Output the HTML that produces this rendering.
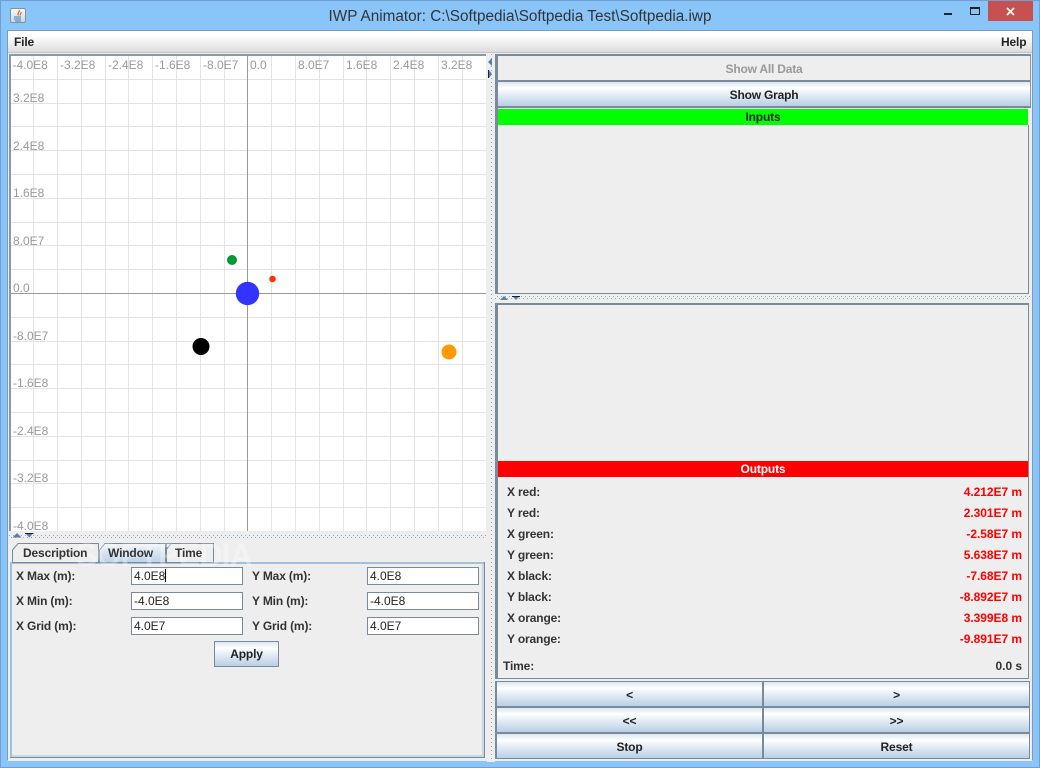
<!DOCTYPE html>
<html><head><meta charset="utf-8"><title>IWP Animator</title>
<style>
html,body{margin:0;padding:0;width:1040px;height:768px;overflow:hidden;background:#8ac5fa}
*{box-sizing:border-box}
body{font-family:"Liberation Sans",sans-serif;font-size:12px;color:#222;position:relative}
.a{position:absolute}
.b{position:absolute;background:#7a8a99}
.t{position:absolute;white-space:nowrap;font-weight:bold;font-size:12px;line-height:14px;color:#333;letter-spacing:-.15px}
.btn{position:absolute;background:linear-gradient(#dbe6f1 0,#fff 25%,#eaf1f8 45%,#b8cfe5 100%);text-align:center;font-weight:bold;color:#222;font-size:12px;letter-spacing:-.15px}
.f{position:absolute;width:112px;height:18px;background:#fff;border:1px solid #7a8a99;padding-left:2px;font-size:12px;line-height:16px;color:#222}
.r{position:absolute;right:18px;font-weight:bold;color:#f00;font-size:12px;line-height:14px;white-space:nowrap;letter-spacing:-.05px}
</style></head><body>
<div class="a" style="left:0;top:0;width:1040px;height:768px;border:1px solid #6fa0d0"></div>
<!-- title -->
<div class="a" style="left:10px;top:8px;width:16px;height:15px;border:1px solid #7d93a8;border-radius:2px;background:linear-gradient(#f4f7fa,#c9d8e6)"></div>
<svg class="a" style="left:10px;top:8px" width="16" height="15"><path d="M9 2c1.500 2-2.500 3-.5 5.500M11 4c.5 1.500-1.500 2-.5 3.500" stroke="#e0661c" stroke-width="1.200" fill="none"/><path d="M4 9h7M4 11h7M5 13h6" stroke="#4a7ba8" stroke-width="1" fill="none"/></svg>
<div class="a" style="left:0;top:8px;width:1040px;text-align:center;font-size:15.3px;line-height:18px;color:#333">IWP Animator: C:\Softpedia\Softpedia Test\Softpedia.iwp</div>
<div class="a" style="left:944px;top:13px;width:8px;height:2px;background:#222"></div>
<div class="a" style="left:970px;top:7px;width:10px;height:8px;border:1px solid #222;border-top-width:2px"></div>
<div class="a" style="left:988px;top:1px;width:45px;height:20px;background:#c75050"></div>
<svg class="a" style="left:1006px;top:7px" width="9" height="9"><path d="M1 1l7 7M8 1l-7 7" stroke="#fff" stroke-width="1.700"/></svg>
<!-- client -->
<div class="a" style="left:7px;top:30px;width:1026px;height:731px;border:1px solid #7a9ab8;border-bottom:1px solid #eee;background:#eeeeee"></div>
<div class="a" style="left:8px;top:31px;width:1024px;height:22px;background:linear-gradient(#fff,#fff 20%,#dcdcdc);border-bottom:1px solid #c4c4c4"></div>
<div class="t" style="left:14px;top:35px;color:#222">File</div>
<div class="t" style="left:1001px;top:35px;color:#222">Help</div>
<!-- plot -->
<svg class="a" style="left:9px;top:54px;shape-rendering:crispEdges" width="478" height="478" viewBox="9 54 478 478">
<rect x="9" y="54" width="478" height="478" fill="#fff"/>
<path stroke="#e3e3e3" stroke-width="1" fill="none" d="M33.500 55V532M57.500 55V532M81.500 55V532M105.500 55V532M128.500 55V532M152.500 55V532M176.500 55V532M200.500 55V532M224.500 55V532M271.500 55V532M295.500 55V532M319.500 55V532M343.500 55V532M366.500 55V532M390.500 55V532M414.500 55V532M438.500 55V532M462.500 55V532M10 79.500H486M10 103.500H486M10 126.500H486M10 150.500H486M10 174.500H486M10 198.500H486M10 222.500H486M10 245.500H486M10 269.500H486M10 317.500H486M10 341.500H486M10 364.500H486M10 388.500H486M10 412.500H486M10 436.500H486M10 460.500H486M10 483.500H486M10 507.500H486"/>
<path stroke="#999" stroke-width="1" fill="none" d="M247.500 55V532M10 293.500H486"/>
<rect x="9" y="54" width="478" height="2" fill="#8a99a8"/><rect x="9" y="54" width="2" height="478" fill="#8a99a8"/>
<rect x="486" y="54" width="1" height="478" fill="#eee"/>
<g shape-rendering="auto" font-family="Liberation Sans" font-size="12" fill="#999">
<text x="12.500" y="69">-4.0E8</text><text x="60" y="69">-3.2E8</text><text x="108" y="69">-2.4E8</text><text x="155" y="69">-1.6E8</text><text x="203" y="69">-8.0E7</text><text x="250" y="69">0.0</text><text x="298" y="69">8.0E7</text><text x="346" y="69">1.6E8</text><text x="393" y="69">2.4E8</text><text x="441" y="69">3.2E8</text>
<text x="13" y="102">3.2E8</text><text x="13" y="150">2.4E8</text><text x="13" y="197">1.6E8</text><text x="13" y="245">8.0E7</text><text x="13" y="292">0.0</text><text x="13" y="340">-8.0E7</text><text x="13" y="387">-1.6E8</text><text x="13" y="435">-2.4E8</text><text x="13" y="482">-3.2E8</text><text x="13" y="530">-4.0E8</text>
<circle cx="232" cy="260" r="5" fill="#009933"/><circle cx="272.500" cy="279" r="3.300" fill="#ff3300"/><circle cx="247.500" cy="293.500" r="11.700" fill="#3333ff"/><circle cx="201" cy="346.500" r="8.500" fill="#000"/><circle cx="449" cy="352" r="7.500" fill="#ff9900"/>
</g></svg>
<!-- splitter left horizontal -->
<svg class="a" style="left:9px;top:531px" width="478" height="10"><defs><pattern id="p" width="4" height="4" patternUnits="userSpaceOnUse"><rect x="0" y="0" width="1" height="1" fill="#8fa8c2"/><rect x="2" y="2" width="1" height="1" fill="#8fa8c2"/></pattern></defs><rect width="478" height="10" fill="#eee"/><rect y="4" width="478" height="3" fill="url(#p)"/><path d="M3.500 6.500L8 2l4.500 4.500z" fill="#5b7ea8"/><path d="M16 2h8.500L20.300 6.500z" fill="#5b7ea8"/><rect x="16" y="2" width="8.500" height="1" fill="#222"/></svg>
<!-- splitter vertical -->
<svg class="a" style="left:487px;top:54px" width="8" height="708"><defs><pattern id="q" width="4" height="4" patternUnits="userSpaceOnUse"><rect x="0" y="0" width="1" height="1" fill="#8fa8c2"/><rect x="2" y="2" width="1" height="1" fill="#8fa8c2"/></pattern></defs><rect width="8" height="708" fill="#eee"/><rect x="3" width="3" height="708" fill="url(#q)"/><path d="M1 8L5 4v8z" fill="#5b7ea8"/><path d="M1 16h1v8H1z" fill="#222"/><path d="M2 16v8l3-4z" fill="#5b7ea8"/></svg>
<!-- bottom left tabs -->
<div class="a" style="left:10px;top:562px;width:475px;height:196px;background:#eee;border:1px solid #a3bfdc;border-width:2px 0 0 2px"></div>
<div class="b" style="left:484px;top:562px;width:1px;height:196px"></div>
<div class="b" style="left:10px;top:757px;width:475px;height:1px"></div>
<div class="a" style="left:12px;top:755px;width:472px;height:2px;background:#c9d7e6"></div>
<div class="a" style="left:482px;top:564px;width:2px;height:193px;background:#c9d7e6"></div>
<svg class="a" style="left:10px;top:541px" width="210" height="23"><defs><linearGradient id="w" x1="0" y1="0" x2="0" y2="1"><stop offset="0" stop-color="#f0f4fa"/><stop offset="1" stop-color="#bcd1e8"/></linearGradient></defs><path d="M2.500 21.500V9L8 2.500H88.500V21.500z" fill="#eee" stroke="#7a8a99"/><path d="M156.500 21.500V2.500H203.500V21.500z" fill="#eee" stroke="#7a8a99"/><path d="M89.500 21.500V9L95 2.500H155.500V21.500z" fill="url(#w)" stroke="#7a8a99"/><path d="M156 21.500V9L161 2.500" fill="none" stroke="#7a8a99"/></svg>
<div class="a" style="left:76px;top:535px;font-size:32px;font-weight:bold;color:#fff;opacity:.3;white-space:nowrap;letter-spacing:-.8px;line-height:40px">SOFTPEDIA</div>
<div class="t" style="left:23px;top:546px">Description</div>
<div class="t" style="left:108px;top:546px">Window</div>
<div class="t" style="left:175px;top:546px">Time</div>
<div class="t" style="left:16px;top:569px">X Max (m):</div>
<div class="t" style="left:16px;top:594px">X Min (m):</div>
<div class="t" style="left:16px;top:619px">X Grid (m):</div>
<div class="t" style="left:252px;top:569px">Y Max (m):</div>
<div class="t" style="left:252px;top:594px">Y Min (m):</div>
<div class="t" style="left:252px;top:619px">Y Grid (m):</div>
<div class="f" style="left:131px;top:567px">4.0E8<span style="display:inline-block;width:1px;height:13px;background:#000;vertical-align:-2px"></span></div>
<div class="f" style="left:131px;top:592px">-4.0E8</div>
<div class="f" style="left:131px;top:617px">4.0E7</div>
<div class="f" style="left:367px;top:567px">4.0E8</div>
<div class="f" style="left:367px;top:592px">-4.0E8</div>
<div class="f" style="left:367px;top:617px">4.0E7</div>
<div class="btn" style="left:214px;top:641px;width:65px;height:26px;border:1px solid #7a8a99;line-height:25px">Apply</div>
<!-- right top -->
<div class="b" style="left:495px;top:54px;width:536px;height:54px"></div>
<div class="a" style="left:1030px;top:56px;width:1px;height:50px;background:#8a99a8"></div>
<div class="a" style="left:498px;top:56px;width:532px;height:24px;background:#eee;text-align:center;font-weight:bold;color:#999;line-height:26px;letter-spacing:-.2px">Show All Data</div>
<div class="btn" style="left:498px;top:82px;width:532px;height:24px;line-height:26px;letter-spacing:-.2px">Show Graph</div>
<div class="a" style="left:495px;top:108px;width:535px;height:186px;background:#eee"></div>
<div class="b" style="left:495px;top:108px;width:3px;height:186px"></div>
<div class="b" style="left:495px;top:293px;width:534px;height:1px"></div>
<div class="b" style="left:1028px;top:125px;width:1px;height:169px"></div>
<div class="a" style="left:498px;top:109px;width:530px;height:16px;background:#00ff00;text-align:center;font-weight:bold;line-height:17px;color:#222;letter-spacing:-.15px">Inputs</div>
<svg class="a" style="left:495px;top:294px" width="535" height="9"><defs><pattern id="s" width="4" height="4" patternUnits="userSpaceOnUse"><rect x="0" y="0" width="1" height="1" fill="#8fa8c2"/><rect x="2" y="2" width="1" height="1" fill="#8fa8c2"/></pattern></defs><rect width="535" height="9" fill="#eee"/><rect x="0" y="2" width="535" height="3" fill="url(#s)"/><path d="M5 6L9 2l4 4z" fill="#5b7ea8"/><path d="M17 2h8L21 6z" fill="#5b7ea8"/><rect x="17" y="2" width="8" height="1" fill="#222"/></svg>
<!-- outputs -->
<div class="a" style="left:495px;top:303px;width:534px;height:376px;background:#eee"></div>
<div class="b" style="left:495px;top:303px;width:534px;height:2px"></div>
<div class="b" style="left:495px;top:303px;width:3px;height:376px"></div>
<div class="b" style="left:1028px;top:303px;width:1px;height:376px"></div>
<div class="b" style="left:495px;top:678px;width:534px;height:1px"></div>
<div class="a" style="left:498px;top:461px;width:530px;height:16px;background:#ff0000;text-align:center;font-weight:bold;color:#fff;line-height:17px;letter-spacing:-.15px">Outputs</div>
<div class="t" style="left:507px;top:485px">X red:</div><div class="r" style="top:485px">4.212E7 m</div>
<div class="t" style="left:507px;top:506px">Y red:</div><div class="r" style="top:506px">2.301E7 m</div>
<div class="t" style="left:507px;top:527px">X green:</div><div class="r" style="top:527px">-2.58E7 m</div>
<div class="t" style="left:507px;top:548px">Y green:</div><div class="r" style="top:548px">5.638E7 m</div>
<div class="t" style="left:507px;top:569px">X black:</div><div class="r" style="top:569px">-7.68E7 m</div>
<div class="t" style="left:507px;top:590px">Y black:</div><div class="r" style="top:590px">-8.892E7 m</div>
<div class="t" style="left:507px;top:611px">X orange:</div><div class="r" style="top:611px">3.399E8 m</div>
<div class="t" style="left:507px;top:632px">Y orange:</div><div class="r" style="top:632px">-9.891E7 m</div>
<div class="t" style="left:503px;top:659px">Time:</div><div class="r" style="top:659px;color:#333">0.0 s</div>
<!-- buttons -->
<div class="b" style="left:495px;top:681px;width:535px;height:78px"></div>
<div class="btn" style="left:497px;top:682px;width:265px;height:24px;line-height:26px">&lt;</div>
<div class="btn" style="left:764px;top:682px;width:265px;height:24px;line-height:26px">&gt;</div>
<div class="btn" style="left:497px;top:708px;width:265px;height:24px;line-height:26px">&lt;&lt;</div>
<div class="btn" style="left:764px;top:708px;width:265px;height:24px;line-height:26px">&gt;&gt;</div>
<div class="btn" style="left:497px;top:734px;width:265px;height:24px;line-height:26px">Stop</div>
<div class="btn" style="left:764px;top:734px;width:265px;height:24px;line-height:26px">Reset</div>
</body></html>
